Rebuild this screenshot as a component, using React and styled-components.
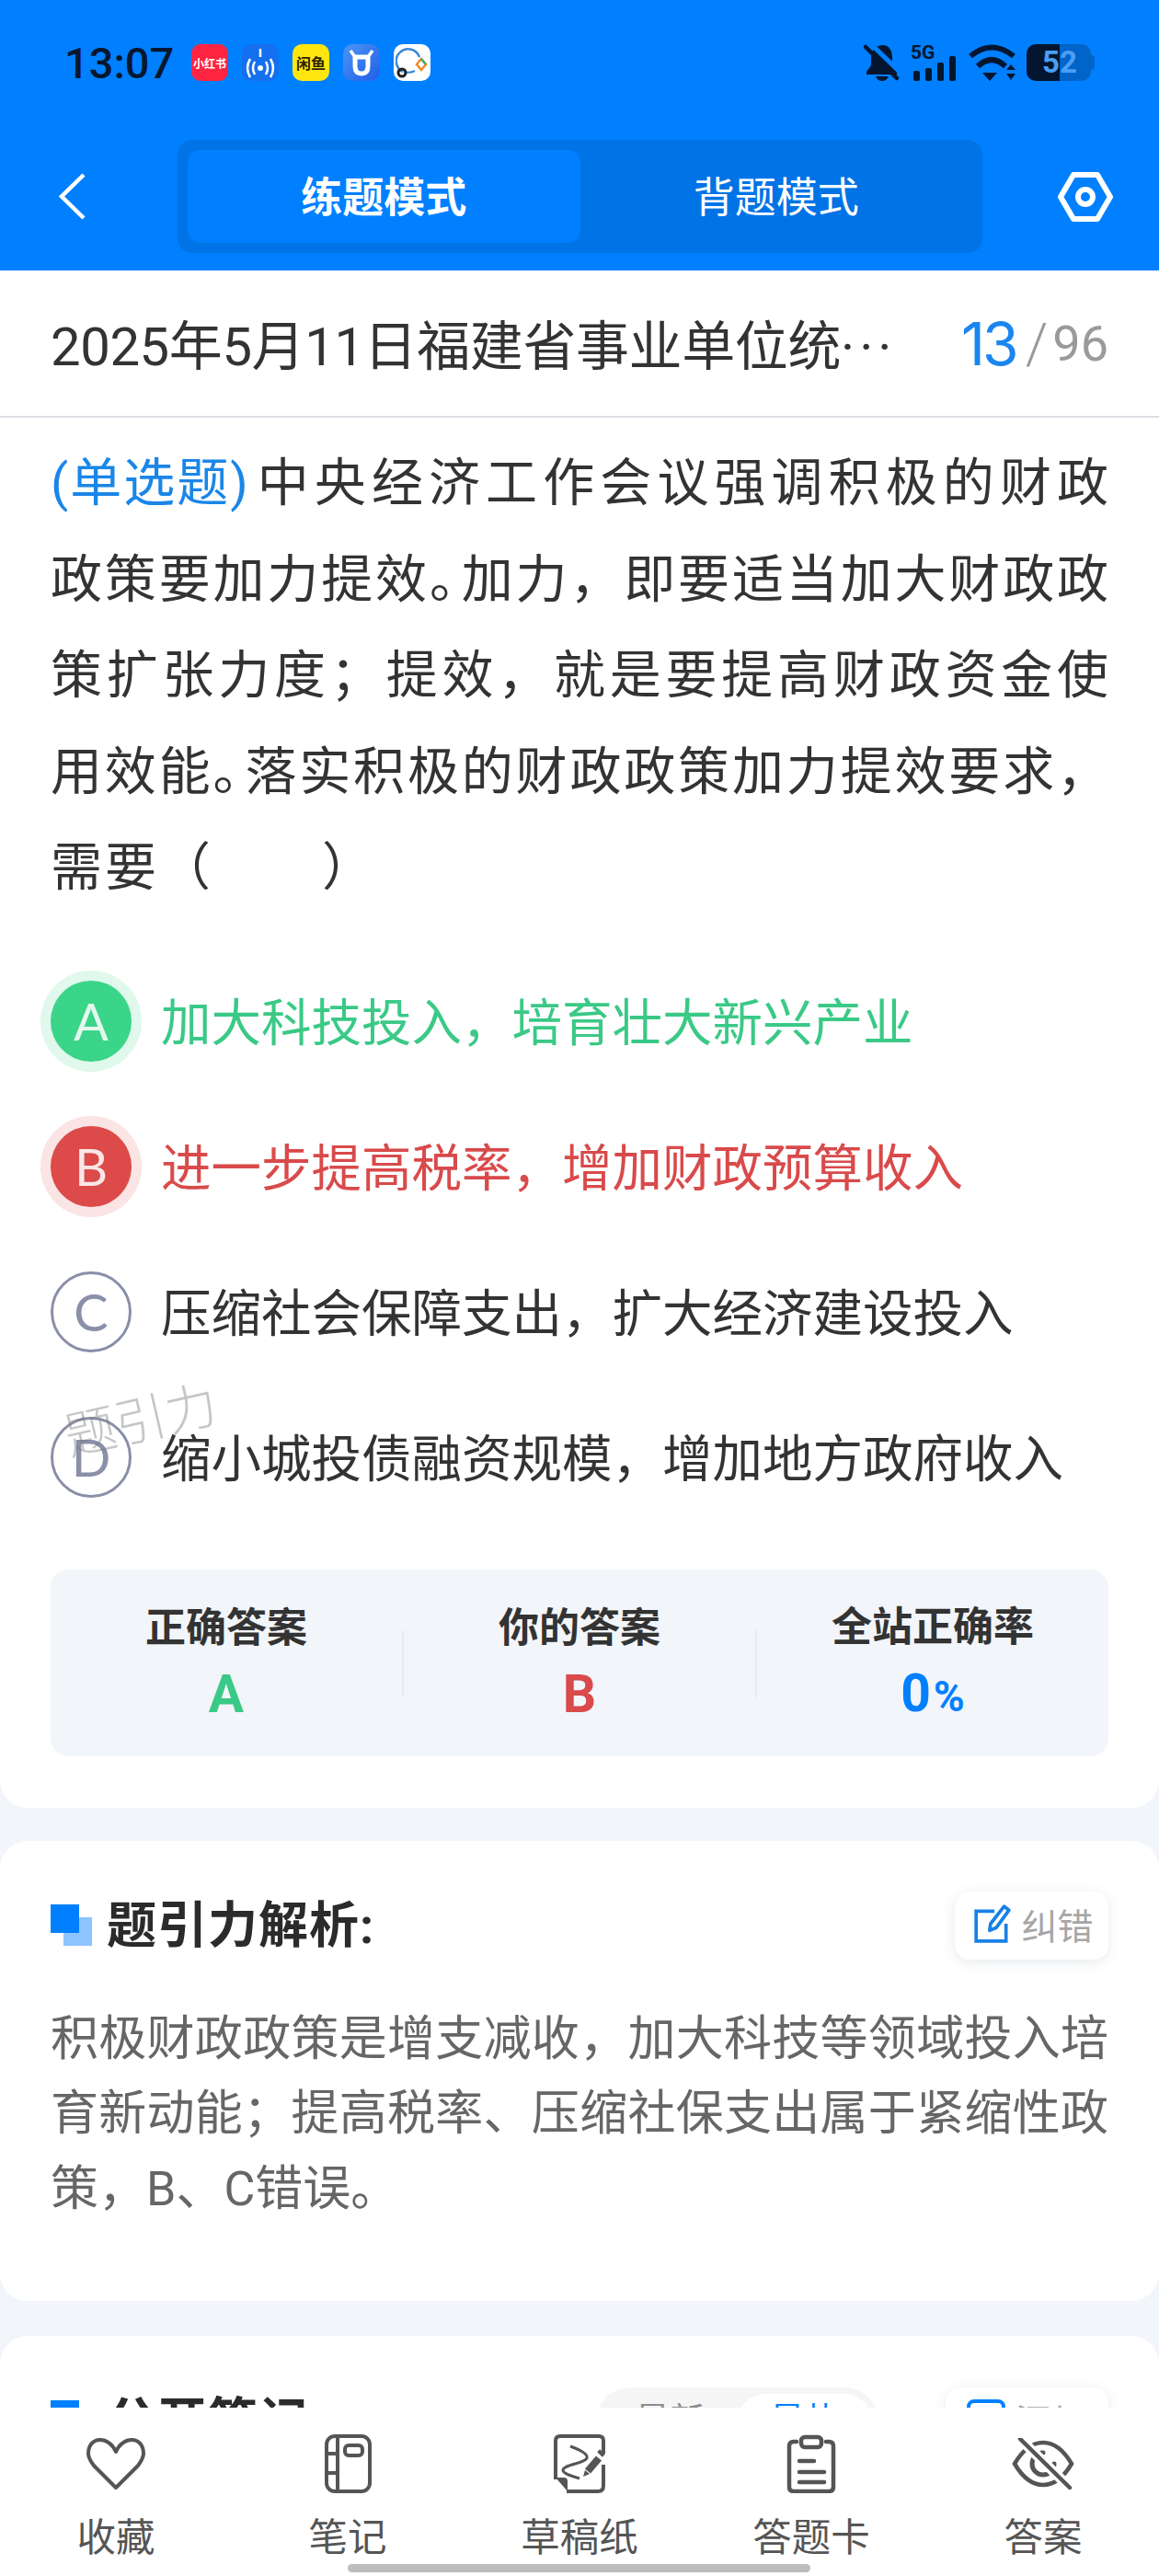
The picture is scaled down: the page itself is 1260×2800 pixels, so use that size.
import React from "react";
import styled, { createGlobalStyle } from "styled-components";

const BLUE = "#0080ff";
const GREEN = "#3ac986";
const RED = "#d94a4b";
const INK = "#333333";
const PAGE = "#f2f5f9";
const DARK = "#04162f";
const SANS = `"Roboto", "Noto Sans CJK SC", sans-serif`;

const GlobalStyle = createGlobalStyle`
  html, body {
    margin: 0;
    padding: 0;
    background: ${PAGE};
    font-family: ${SANS};
  }
  * {
    box-sizing: border-box;
  }
`;

const Screen = styled.div`
  position: relative;
  width: 1260px;
  height: 2800px;
  overflow: hidden;
  background: ${PAGE};
`;

const Header = styled.header`
  height: 294px;
  background: ${BLUE};
`;

const StatusRow = styled.div`
  display: flex;
  align-items: center;
  height: 136px;
  padding: 0 70px;
`;

const Clock = styled.div`
  width: 118px;
  margin-right: 20px;
  font-size: 47px;
  font-weight: 500;
  color: #07172f;
  white-space: nowrap;
`;

const AppTiles = styled.div`
  display: flex;
  gap: 15px;
`;

const AppTile = styled.div`
  display: flex;
  align-items: center;
  justify-content: center;
  width: 40px;
  height: 40px;
  border-radius: 10px;
  background: ${({ $bg }) => $bg};
  color: ${({ $fg }) => $fg};
  font-size: ${({ $size }) => $size}px;
  font-weight: 700;
  white-space: nowrap;
  overflow: hidden;
`;

const StatusIcons = styled.div`
  display: flex;
  align-items: center;
  margin-left: auto;
  gap: 12px;
`;

const SignalBox = styled.div`
  position: relative;
  width: 50px;
  height: 40px;
`;

const SignalLabel = styled.span`
  position: absolute;
  left: 0;
  top: 1px;
  font-size: 21px;
  font-weight: 700;
  line-height: 17px;
  color: ${DARK};
`;

const Battery = styled.div`
  display: flex;
  align-items: center;
  width: 74px;
  height: 40px;
  margin-left: -1px;
`;

const BatteryCell = styled.div`
  display: flex;
  align-items: center;
  justify-content: ${({ $full }) => ($full ? "flex-end" : "flex-start")};
  width: ${({ $full }) => ($full ? 36 : 34)}px;
  height: 40px;
  background: ${({ $full }) => ($full ? DARK : "#0064c8")};
  border-radius: ${({ $full }) => ($full ? "10px 0 0 10px" : "0 10px 10px 0")};
  color: #4a9ff5;
  font-size: 33px;
  font-weight: 700;
  line-height: 40px;
`;

const BatteryTip = styled.div`
  width: 4px;
  height: 16px;
  background: #0064c8;
  border-radius: 0 3px 3px 0;
`;

const NavRow = styled.div`
  display: flex;
  align-items: center;
  height: 123px;
  margin-top: 16px;
  padding: 0 50px 0 64px;
`;

const BackIcon = styled.svg`
  flex: none;
  width: 29px;
  height: 51px;
`;

const ModeSwitch = styled.div`
  display: flex;
  width: 875px;
  height: 123px;
  margin-left: 100px;
  padding: 11px;
  background: #0073e6;
  border-radius: 16px;
`;

const ModeTab = styled.div`
  flex: 1;
  display: flex;
  align-items: center;
  justify-content: center;
  padding-bottom: 5px;
  border-radius: 14px;
  background: ${({ $active }) => ($active ? BLUE : "transparent")};
  color: #ffffff;
  font-size: 45px;
  font-weight: ${({ $active }) => ($active ? 700 : 400)};
`;

const SettingIcon = styled.svg`
  flex: none;
  width: 60px;
  height: 54px;
  margin-left: auto;
`;

const Card = styled.section`
  position: relative;
  background: #ffffff;
  border-radius: ${({ $flatTop }) => ($flatTop ? "0 0 30px 30px" : "30px")};
  padding: ${({ $pad }) => $pad};
  margin-bottom: ${({ $gap }) => $gap || 0}px;
`;

const PaperTitle = styled.div`
  display: flex;
  align-items: center;
  height: 160px;
  padding: 0 55px;
  background: #ffffff;
  border-bottom: 2px solid #dcdfe4;
`;

const PaperName = styled.div`
  flex: 1;
  padding-bottom: 3px;
  font-size: 58px;
  letter-spacing: -0.4px;
  color: ${INK};
  white-space: nowrap;
`;

const PaperDots = styled.span`
  letter-spacing: 5px;
`;

const Progress = styled.div`
  display: flex;
  align-items: center;
  color: #9a9a9a;
  font-size: 54px;
`;

const ProgressNow = styled.span`
  font-family: "Inter", sans-serif;
  font-size: 64px;
  font-weight: 400;
  letter-spacing: -3px;
  color: #1a86f0;
`;

const ProgressSlash = styled.span`
  margin: 0 5px 0 10px;
  font-size: 62px;
  font-weight: 300;
`;

const Question = styled.div`
  font-size: 56px;
  line-height: 104.5px;
  color: ${INK};
`;

const QuestionLine = styled.div`
  text-align: justify;
  text-align-last: ${({ $last }) => ($last ? "left" : "justify")};
  letter-spacing: ${({ $last }) => ($last ? 3 : 0)}px;
`;

const QuestionType = styled.span`
  display: inline-block;
  margin-right: 2px;
  letter-spacing: 2px;
  color: #1a86e8;
`;

/* the period sits in half a cell in the reference */
const Stop = styled.span`
  letter-spacing: -24px;
`;

const Options = styled.div`
  margin-top: 35px;
`;

const OptionRow = styled.div`
  display: flex;
  align-items: center;
  height: 158px;
  font-size: 54.5px;
  color: ${({ $tone }) =>
    $tone === "right" ? GREEN : $tone === "wrong" ? RED : INK};
`;

const OptionBadge = styled.div`
  flex: none;
  display: flex;
  align-items: center;
  justify-content: center;
  width: 88px;
  height: 88px;
  border-radius: 50%;
  font-family: "Lato", sans-serif;
  font-size: 56px;
  font-weight: 400;
  margin-right: 32px;
  ${({ $tone }) =>
    $tone === "right"
      ? `background: #3ad589; color: #e4f9ee; box-shadow: 0 0 0 11px #e1f8ec;`
      : $tone === "wrong"
      ? `background: #dc4a4a; color: #fbe6e6; box-shadow: 0 0 0 11px #fae4e4;`
      : `border: 3px solid #8a8fa8; color: #8a90aa;`}
`;

const OptionText = styled.span`
  padding-bottom: 5px;
`;

const Watermark = styled.div`
  position: absolute;
  left: 68px;
  top: 1045px;
  font-family: "Noto Sans CJK SC", sans-serif;
  font-size: 56px;
  font-weight: 300;
  color: rgba(120, 120, 120, 0.42);
  transform: rotate(-13deg);
  white-space: nowrap;
  pointer-events: none;
`;

const Stats = styled.div`
  display: flex;
  align-items: center;
  height: 203px;
  margin-top: 43px;
  padding-top: 3px;
  background: ${PAGE};
  border-radius: 20px;
`;

const Stat = styled.div`
  flex: 1;
  text-align: center;
`;

const StatLabel = styled.div`
  font-size: 44px;
  font-weight: 700;
  line-height: 60px;
  color: ${INK};
`;

const StatValue = styled.div`
  margin-top: 7px;
  font-size: 57px;
  font-weight: 700;
  line-height: 70px;
  color: ${({ $color }) => $color};
`;

const StatZero = styled.span`
  letter-spacing: 3px;
`;

const StatUnit = styled.span`
  font-size: 46px;
`;

const StatDivider = styled.div`
  flex: none;
  width: 2px;
  height: 73px;
  background: #e7ebf0;
`;

const SectionHead = styled.div`
  display: flex;
  align-items: center;
  height: 74px;
`;

const SectionMark = styled.div`
  position: relative;
  flex: none;
  width: 45px;
  height: 45px;
  margin-right: 16px;
  background: linear-gradient(#8cc5ff, #8cc5ff) 14px 14px / 31px 31px no-repeat;

  &::before {
    content: "";
    position: absolute;
    left: 0;
    top: 0;
    width: 31px;
    height: 31px;
    background: ${BLUE};
  }
`;

const SectionTitle = styled.h2`
  flex: 1;
  margin: 0 0 8px;
  font-size: 54px;
  font-weight: 700;
  letter-spacing: 1px;
  color: #2b2b2b;
`;

const GhostButton = styled.div`
  display: flex;
  align-items: center;
  justify-content: center;
  gap: 11px;
  width: ${({ $wide }) => ($wide ? 177 : 167)}px;
  height: 74px;
  padding: 0 0 4px ${({ $wide }) => ($wide ? 0 : 5)}px;
  background: #ffffff;
  border-radius: 16px;
  box-shadow: 0 3px 14px rgba(60, 80, 110, 0.12);
  font-size: 39px;
  color: #a6a6a6;
`;

const Explain = styled.p`
  margin: 46px 0 0;
  font-size: 52px;
  line-height: 81.7px;
  color: #666666;
`;

const ExplainLine = styled.span`
  display: block;
  white-space: nowrap;
  text-align-last: ${({ $last }) => ($last ? "left" : "justify")};
`;

const Sorter = styled.div`
  display: flex;
  align-items: center;
  width: 307px;
  height: 74px;
  padding: 7px;
  margin-right: 73px;
  background: #f5f5f5;
  border-radius: 37px;
  font-size: 38px;
`;

const SorterItem = styled.div`
  flex: 1;
  display: flex;
  align-items: center;
  justify-content: center;
  height: 60px;
  padding-bottom: 8px;
  border-radius: 30px;
  background: ${({ $active }) => ($active ? "#ffffff" : "transparent")};
  color: ${({ $active }) => ($active ? BLUE : "#8c8c8c")};
`;

const TabBar = styled.nav`
  position: absolute;
  left: 0;
  right: 0;
  bottom: 0;
  height: 183px;
  display: flex;
  padding-top: 26px;
  background: #ffffff;
`;

const TabItem = styled.div`
  flex: 1;
  display: flex;
  flex-direction: column;
  align-items: center;
`;

const TabIconBox = styled.div`
  display: flex;
  align-items: center;
  justify-content: center;
  height: 70px;
`;

const TabLabel = styled.div`
  margin-top: 21px;
  font-size: 42.5px;
  line-height: 50px;
  color: #555555;
`;

const HomeBar = styled.div`
  position: absolute;
  left: 378px;
  bottom: 4px;
  width: 503px;
  height: 9px;
  border-radius: 5px;
  background: #bdbdbd;
`;

const BellOff = () => (
  <svg width="39" height="40" viewBox="0 0 39 40">
    <path fill={DARK} d="M21 1c-7 0-13 5-13 14v8l-5 7v3h33v-3l-5-7v-8C31 6 27 1 21 1z" />
    <path fill={DARK} d="M13 35h14c-1 3-4 5-7 5s-6-2-7-5z" />
    <path d="M3 1l36 35" stroke={BLUE} strokeWidth="5" transform="translate(3 -3)" fill="none" />
    <path d="M2 3l34 34" stroke={DARK} strokeWidth="4.500" strokeLinecap="round" fill="none" />
  </svg>
);

const SignalBars = styled.svg`
  position: absolute;
  left: 0;
  bottom: 0;
`;

const Signal = () => (
  <SignalBox>
    <SignalLabel>5G</SignalLabel>
    <SignalBars width="50" height="28" viewBox="0 0 50 28" fill={DARK}>
      <rect x="3" y="17" width="7" height="11" rx="2" />
      <rect x="16" y="14" width="7" height="14" rx="2" />
      <rect x="29" y="8" width="7" height="20" rx="2" />
      <rect x="42" y="1" width="7" height="27" rx="2" />
    </SignalBars>
  </SignalBox>
);

const Wifi = () => (
  <svg width="53" height="40" viewBox="0 0 53 40" fill="none">
    <path d="M3 13Q26-6 50 13" stroke={DARK} strokeWidth="6" />
    <path d="M11 24Q26 10 41 24" stroke={DARK} strokeWidth="6" />
    <path d="M16 31h16l-8 9z" fill={DARK} />
    <path d="M42 28h10l-5-6zM42 32h10l-5 7z" fill={DARK} />
  </svg>
);

const Heart = () => (
  <svg width="64" height="56" viewBox="0 0 64 56" fill="none" stroke="#555" strokeWidth="4" strokeLinejoin="round">
    <path d="M32 15C28 6 21 2 15 2 7 2 2 8 2 17c0 5 3 9 6 13l24 24 24-24c3-4 6-8 6-13 0-9-5-15-13-15-6 0-13 4-17 13z" />
  </svg>
);

const Notebook = () => (
  <svg width="51" height="64" viewBox="0 0 51 64" fill="none" stroke="#555" strokeWidth="4">
    <rect x="2" y="2" width="47" height="60" rx="9" />
    <path d="M14 2v60M2 21h12M2 42h12" />
    <rect x="22" y="12" width="19" height="11" rx="4" />
  </svg>
);

const SketchPaper = () => (
  <svg width="56" height="64" viewBox="0 0 56 64" fill="none" stroke="#555" strokeWidth="4">
    <path d="M14 62h34q6 0 6-6V33M54 21V7q0-5-5-5H7Q2 2 2 7v42" />
    <path d="M2 47h9q4 0 4 4v11z" fill="#555" stroke="none" />
    <path d="M18 13c8 3 20 8 18 13-3 6-26 7-26 13 0 4 12 7 18 9" strokeWidth="3" />
    <path d="M37 40l12-14" strokeWidth="8" />
    <path d="M50 22l3-3" strokeWidth="8" />
    <path d="M32 46l2-7 5 4z" fill="#555" stroke="none" />
  </svg>
);

const Clipboard = () => (
  <svg width="54" height="64" viewBox="0 0 54 64" fill="none" stroke="#555" strokeWidth="4.500" strokeLinecap="round">
    <path d="M11 8H8q-5 0-5 5v44q0 5 5 5h38q5 0 5-5V13q0-5-5-5h-3" />
    <rect x="16" y="3" width="22" height="11" rx="4" />
    <path d="M14 29h16M14 41h27M14 52h27" />
  </svg>
);

const EyeOff = () => (
  <svg width="68" height="56" viewBox="0 0 68 56" fill="none" stroke="#555" strokeWidth="4.500" strokeLinecap="round">
    <path d="M3 28C13 11 24 5 34 5s21 6 31 23c-10 17-21 23-31 23S13 45 3 28z" />
    <path d="M34 16a12 12 0 1 0 12 12" strokeWidth="5" />
    <path d="M9 1l54 53" stroke="#fff" strokeWidth="11" />
    <path d="M9 1l54 53" />
  </svg>
);

const EditIcon = () => (
  <svg width="40" height="42" viewBox="0 0 38 40" fill="none" stroke="#1781e6" strokeWidth="3.500">
    <path d="M21 7H2v31h31V20" />
    <path d="M31 2l5 4-13 18-7 3 1-7z" strokeLinejoin="round" />
  </svg>
);

const AddIcon = () => (
  <svg width="42" height="44" viewBox="0 0 42 44" fill="none" stroke={BLUE} strokeWidth="4">
    <rect x="2" y="2" width="38" height="40" rx="6" />
  </svg>
);

const tabs = [
  { label: "收藏", Icon: Heart },
  { label: "笔记", Icon: Notebook },
  { label: "草稿纸", Icon: SketchPaper },
  { label: "答题卡", Icon: Clipboard },
  { label: "答案", Icon: EyeOff },
];

const options = [
  { key: "A", text: "加大科技投入，培育壮大新兴产业", tone: "right" },
  { key: "B", text: "进一步提高税率，增加财政预算收入", tone: "wrong" },
  { key: "C", text: "压缩社会保障支出，扩大经济建设投入" },
  { key: "D", text: "缩小城投债融资规模，增加地方政府收入" },
];

export default function App() {
  return (
    <Screen>
      <GlobalStyle />
      <Header>
        <StatusRow>
          <Clock>13:07</Clock>
          <AppTiles>
            <AppTile $bg="#ff2442" $fg="#fff" $size={12}>小红书</AppTile>
            <AppTile $bg="#1570ef" $fg="#fff" $size={12}>
              <svg width="34" height="38" viewBox="0 0 34 38" fill="none" stroke="#fff" strokeWidth="2.500">
                <path d="M17 4v9" />
                <circle cx="17" cy="25" r="3" fill="#fff" stroke="none" />
                <path d="M11 18q-4 7 0 14M23 18q4 7 0 14M6 15q-6 10 0 20M28 15q6 10 0 20" />
              </svg>
            </AppTile>
            <AppTile $bg="#ffe60f" $fg="#2a2200" $size={16}>闲鱼</AppTile>
            <AppTile $bg="linear-gradient(135deg, #4d94f5, #1f5fe8)" $fg="#fff" $size={12}>
              <svg width="30" height="30" viewBox="0 0 30 30" fill="none" stroke="#fff" strokeWidth="5">
                <path d="M8 9v10q0 8 7 8t7-8V9z" strokeLinejoin="round" />
                <path d="M8 9L3 2M22 9l5-7" strokeWidth="3.500" />
              </svg>
            </AppTile>
            <AppTile $bg="#fff" $fg="#333" $size={12}>
              <svg width="36" height="36" viewBox="0 0 36 36" fill="none">
                <path d="M8 28a13 13 0 1 1 18-16" stroke="#3a86d8" strokeWidth="2.500" />
                <path d="M9 28q6 2 12-1" stroke="#3a86d8" strokeWidth="2" />
                <circle cx="7" cy="29" r="4" fill="none" stroke="#222" strokeWidth="3" />
                <path d="M28 14l5 6-5 6-5-6z" stroke="#ef8a2c" strokeWidth="2.500" />
                <path d="M28 14l5 6" stroke="#45b36b" strokeWidth="2.500" />
              </svg>
            </AppTile>
          </AppTiles>
          <StatusIcons>
            <BellOff />
            <Signal />
            <Wifi />
            <Battery>
              <BatteryCell $full>5</BatteryCell>
              <BatteryCell>2</BatteryCell>
              <BatteryTip />
            </Battery>
          </StatusIcons>
        </StatusRow>
        <NavRow>
          <BackIcon viewBox="0 0 29 51" fill="none" stroke="#fff" strokeWidth="4.500">
            <path d="M27 2L3 25.500 27 49" />
          </BackIcon>
          <ModeSwitch>
            <ModeTab $active>练题模式</ModeTab>
            <ModeTab>背题模式</ModeTab>
          </ModeSwitch>
          <SettingIcon viewBox="0 0 60 54" fill="none" stroke="#fff" strokeWidth="6" strokeLinejoin="round">
            <path d="M3 27L17 3h26l14 24-14 24H17z" />
            <circle cx="30" cy="27" r="8" />
          </SettingIcon>
        </NavRow>
      </Header>

      <PaperTitle>
        <PaperName>
          2025年5月11日福建省事业单位统<PaperDots>···</PaperDots>
        </PaperName>
        <Progress>
          <ProgressNow>13</ProgressNow>
          <ProgressSlash>/</ProgressSlash>
          96
        </Progress>
      </PaperTitle>

      <Card $flatTop $pad="19px 55px 56px" $gap={36}>
        <Question>
          <QuestionLine>
            <QuestionType>(单选题)</QuestionType>中央经济工作会议强调积极的财政
          </QuestionLine>
          <QuestionLine>
            政策要加力提效<Stop>。</Stop>加力，即要适当加大财政政
          </QuestionLine>
          <QuestionLine>策扩张力度；提效，就是要提高财政资金使</QuestionLine>
          <QuestionLine>
            用效能<Stop>。</Stop>落实积极的财政政策加力提效要求，
          </QuestionLine>
          <QuestionLine $last>需要（　　）</QuestionLine>
        </Question>
        <Options>
          {options.map((item) => (
            <OptionRow key={item.key} $tone={item.tone}>
              <OptionBadge $tone={item.tone}>{item.key}</OptionBadge>
              <OptionText>{item.text}</OptionText>
            </OptionRow>
          ))}
        </Options>
        <Watermark>题引力</Watermark>
        <Stats>
          <Stat>
            <StatLabel>正确答案</StatLabel>
            <StatValue $color={GREEN}>A</StatValue>
          </Stat>
          <StatDivider />
          <Stat>
            <StatLabel>你的答案</StatLabel>
            <StatValue $color={RED}>B</StatValue>
          </Stat>
          <StatDivider />
          <Stat>
            <StatLabel>全站正确率</StatLabel>
            <StatValue $color={BLUE}>
              <StatZero>0</StatZero>
              <StatUnit>%</StatUnit>
            </StatValue>
          </Stat>
        </Stats>
      </Card>

      <Card $pad="55px 55px 80px" $gap={38}>
        <SectionHead>
          <SectionMark />
          <SectionTitle>题引力解析:</SectionTitle>
          <GhostButton>
            <EditIcon />
            纠错
          </GhostButton>
        </SectionHead>
        <Explain>
          <ExplainLine>积极财政政策是增支减收，加大科技等领域投入培</ExplainLine>
          <ExplainLine>育新动能；提高税率、压缩社保支出属于紧缩性政</ExplainLine>
          <ExplainLine $last>策，B、C错误。</ExplainLine>
        </Explain>
      </Card>

      <Card $pad="56px 55px 48px">
        <SectionHead>
          <SectionMark />
          <SectionTitle>公开笔记</SectionTitle>
          <Sorter>
            <SorterItem>最新</SorterItem>
            <SorterItem $active>最热</SorterItem>
          </Sorter>
          <GhostButton $wide>
            <AddIcon />
            添加
          </GhostButton>
        </SectionHead>
      </Card>

      <TabBar>
        {tabs.map(({ label, Icon }) => (
          <TabItem key={label}>
            <TabIconBox>
              <Icon />
            </TabIconBox>
            <TabLabel>{label}</TabLabel>
          </TabItem>
        ))}
      </TabBar>
      <HomeBar />
    </Screen>
  );
}
